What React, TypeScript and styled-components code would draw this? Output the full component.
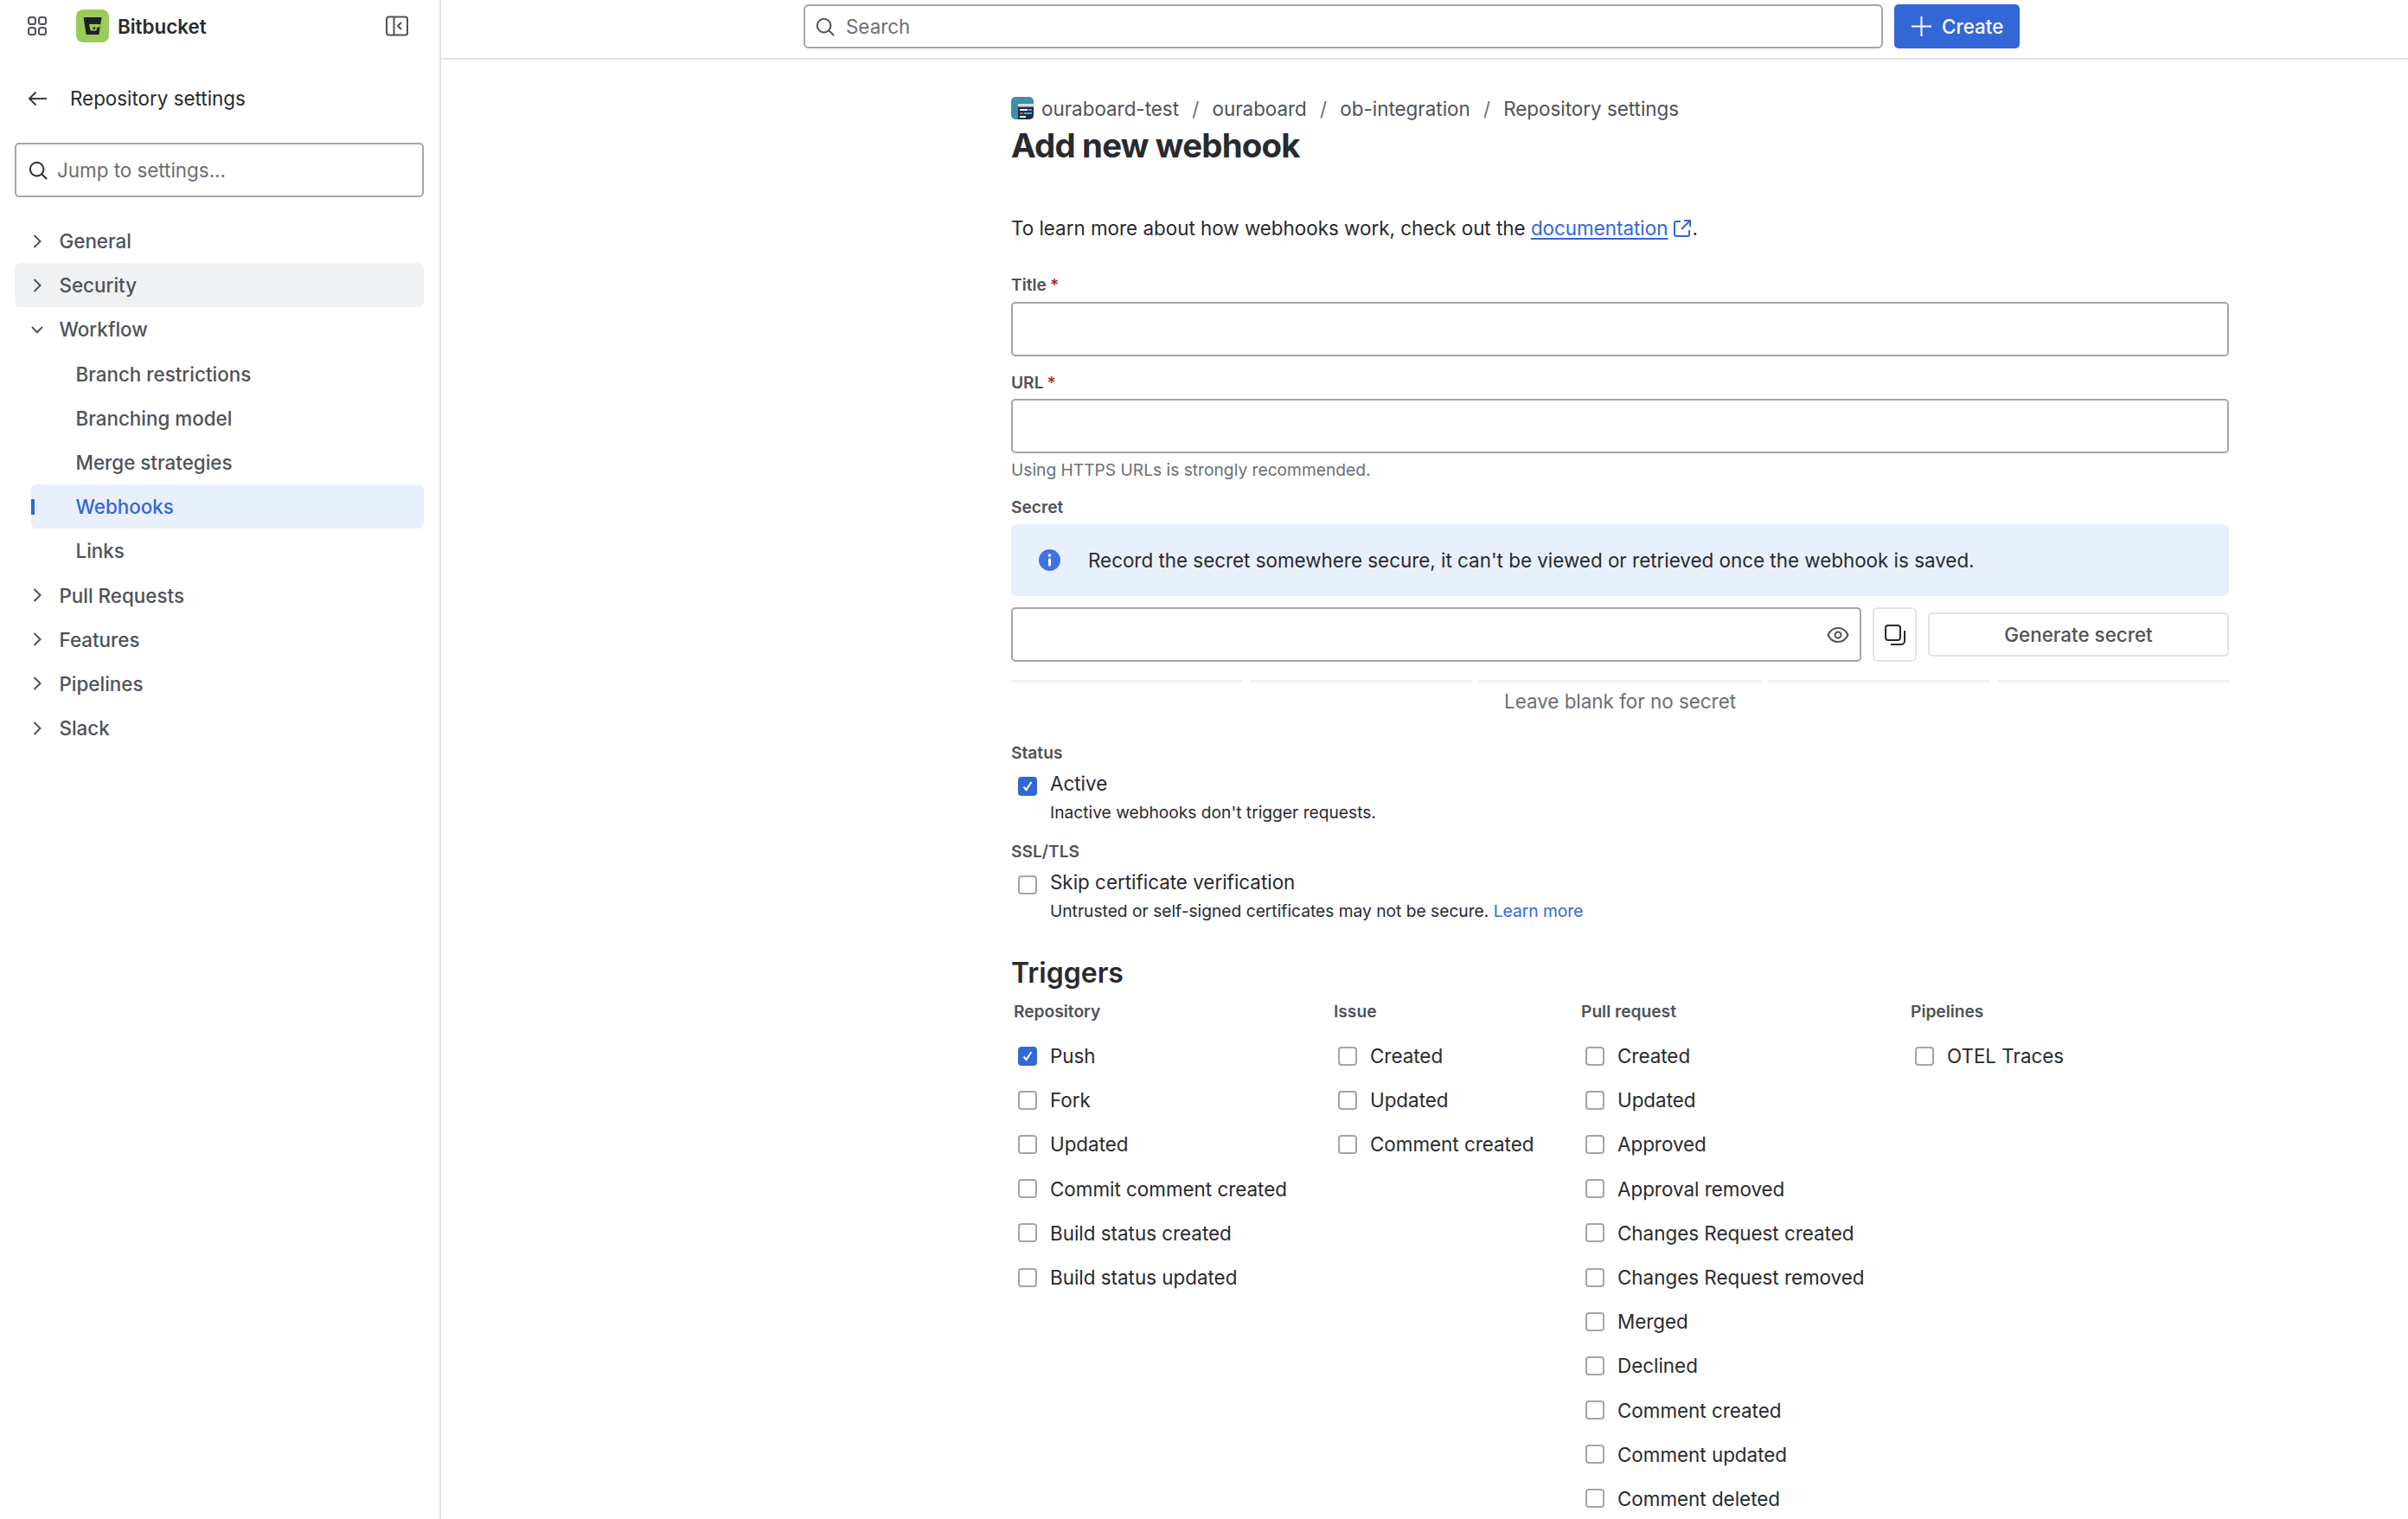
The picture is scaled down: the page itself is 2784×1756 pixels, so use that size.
import React from 'react';
import styled, { createGlobalStyle } from 'styled-components';

const GlobalStyle = createGlobalStyle`
  html, body {
    margin: 0;
    height: 1756px;
    overflow: hidden;
    background: #fff;
  }
  * {
    box-sizing: border-box;
  }
  body {
    font-family: Inter, "Noto Sans", sans-serif;
    font-size: 22.4px;
    color: #292a2e;
  }
`;

const Layout = styled.div`
  display: grid;
  grid-template-columns: 510px 1fr;
  height: 1756px;
  overflow: hidden;
`;

const Sidebar = styled.aside`
  border-right: 2px solid #e2e3e6;
  padding: 0 18px 0 17px;
`;

const SideTop = styled.div`
  display: flex;
  align-items: center;
  height: 60px;
  padding: 0 18px 0 15px;
`;

const Logo = styled.svg`
  width: 38px;
  height: 38px;
  margin-left: 34px;
`;

const BrandName = styled.span`
  margin-left: 10px;
  font-weight: 600;
  font-size: 22.4px;
  flex: 1;
`;

const BackRow = styled.div`
  display: flex;
  align-items: center;
  gap: 27px;
  height: 49px;
  margin-top: 29px;
  padding-left: 15px;
  font-weight: 400;
`;

const JumpBox = styled.label`
  display: flex;
  align-items: center;
  gap: 11px;
  height: 63px;
  margin-top: 27px;
  padding: 0 14px;
  border: 2px solid #a3a5ab;
  border-radius: 5px;
`;

const BareInput = styled.input`
  flex: 1;
  min-width: 0;
  border: 0;
  outline: 0;
  padding: 0;
  background: transparent;
  font: 400 22.4px Inter, sans-serif;
  color: #292a2e;
  &::placeholder {
    color: #6b6e76;
    opacity: 1;
  }
`;

const Nav = styled.nav`
  margin-top: 25px;
`;

const NavRow = styled.div<{ $child?: boolean; $selected?: boolean; $hover?: boolean }>`
  position: relative;
  display: flex;
  align-items: center;
  height: 51.2px;
  margin-left: ${(p) => (p.$child ? '19px' : '0')};
  padding-left: ${(p) => (p.$child ? '51.5px' : '0')};
  border-radius: 6.4px;
  font-weight: 500;
  color: ${(p) => (p.$selected ? '#3367d6' : '#505258')};
  background: ${(p) => (p.$selected ? '#e9f0fd' : p.$hover ? '#f0f1f2' : 'transparent')};
`;

const SelectedMark = styled.span`
  position: absolute;
  left: 0;
  top: 17px;
  width: 4px;
  height: 18px;
  background: #3367d6;
`;

const ChevronSlot = styled.span`
  display: flex;
  justify-content: center;
  align-items: center;
  width: 52px;
  margin-right: -0.5px;
`;

const Main = styled.main`
  min-width: 0;
`;

const TopBar = styled.header`
  display: flex;
  gap: 13px;
  height: 69px;
  padding: 5px 0 0 419px;
  border-bottom: 2px solid #e2e3e6;
`;

const GlobalSearch = styled.label`
  display: flex;
  align-items: center;
  gap: 13px;
  width: 1248px;
  height: 51px;
  padding: 0 12px;
  border: 2px solid #a3a5ab;
  border-radius: 6px;
`;

const CreateButton = styled.button`
  display: flex;
  align-items: center;
  gap: 12px;
  width: 145px;
  height: 51px;
  padding: 0 0 0 20px;
  border: 0;
  border-radius: 5px;
  background: #3367d6;
  color: #fff;
  font: 500 22.4px Inter, sans-serif;
`;

const Content = styled.div`
  width: 2067px;
  padding: 40px 0 0 659px;
`;

const Crumbs = styled.div`
  display: flex;
  align-items: center;
  height: 32px;
  color: #505258;
`;

const CrumbIcon = styled.svg`
  width: 26px;
  height: 26px;
  margin-right: 9px;
`;

const CrumbSep = styled.span`
  width: 38.5px;
  text-align: center;
  color: #6b6e76;
`;

const Heading = styled.h1`
  margin: 5px 0 0;
  font-size: 38.4px;
  line-height: 44px;
  font-weight: 700;
  letter-spacing: -0.8px;
`;

const Intro = styled.p`
  display: flex;
  align-items: center;
  margin: 58px 0 0;
  line-height: 32px;
  white-space: pre;
`;

const DocLink = styled.a`
  color: #3367d6;
  text-decoration: underline;
  text-underline-offset: 3px;
`;

const ExternalIcon = styled.svg`
  width: 22px;
  height: 22px;
  margin-left: 6px;
`;

const FieldLabel = styled.div<{ $top: number }>`
  margin-top: ${(p) => p.$top}px;
  font-size: 19.2px;
  line-height: 24px;
  font-weight: 600;
  color: #505258;
`;

const Required = styled.span`
  margin-left: 4px;
  color: #ae2e24;
`;

const TextField = styled.input<{ $top: number }>`
  display: block;
  width: 100%;
  height: 63px;
  margin-top: ${(p) => p.$top}px;
  padding: 0 14px;
  border: 2px solid #a3a5ab;
  border-radius: 5px;
  outline: 0;
  background: #fff;
`;

const HelpText = styled.div`
  margin-top: 7px;
  font-size: 19.2px;
  line-height: 24px;
  color: #6b6e76;
`;

const Banner = styled.div`
  display: flex;
  align-items: center;
  gap: 32px;
  height: 83px;
  margin-top: 8px;
  padding-left: 32px;
  border-radius: 6.4px;
  background: #e9f0fd;
`;

const SecretRow = styled.div`
  display: flex;
  align-items: center;
  gap: 13px;
  margin-top: 13px;
`;

const SecretField = styled.label`
  display: flex;
  align-items: center;
  width: 983px;
  height: 63px;
  padding: 0 12px 0 14px;
  border: 2px solid #a3a5ab;
  border-radius: 5px;
`;

const CopyButton = styled.button`
  display: flex;
  align-items: center;
  justify-content: center;
  width: 51px;
  height: 63px;
  padding: 0;
  border: 2px solid #e2e3e6;
  border-radius: 6px;
  background: #fff;
`;

const GenerateButton = styled.button`
  flex: 1;
  height: 51px;
  border: 2px solid #e2e3e6;
  border-radius: 5px;
  background: #fff;
  color: #505258;
  font: 500 22.4px Inter, sans-serif;
`;

const StrengthBars = styled.div`
  display: grid;
  grid-template-columns: 268fr 257fr 326fr 257fr 268fr;
  gap: 8px;
  margin-top: 21px;
`;

const StrengthBar = styled.span`
  height: 3px;
  background: #f0f1f2;
`;

const StrengthHint = styled.div`
  margin-top: 6px;
  line-height: 32px;
  text-align: center;
  color: #6b6e76;
`;

const OptionRow = styled.div`
  display: flex;
  align-items: flex-start;
  gap: 15px;
  height: 32px;
  margin-top: 8px;
  padding-left: 8px;
  line-height: 32px;
`;

const OptionNote = styled.div`
  margin-top: 5px;
  padding-left: 45px;
  font-size: 19.2px;
  line-height: 24px;
`;

const NoteLink = styled.a`
  color: #3367d6;
`;

const Box = styled.span<{ $checked?: boolean; $nudge?: boolean }>`
  flex: none;
  display: flex;
  align-items: center;
  justify-content: center;
  width: 22px;
  height: 22px;
  margin-top: ${(p) => (p.$nudge ? '8px' : '0')};
  border: ${(p) => (p.$checked ? '0' : '2px solid #a3a5ab')};
  border-radius: 4px;
  background: ${(p) => (p.$checked ? '#3367d6' : '#fff')};
`;

const SectionTitle = styled.h2`
  margin: 40px 0 0;
  font-size: 32px;
  line-height: 40px;
  font-weight: 600;
`;

const TriggerGrid = styled.div`
  display: grid;
  grid-template-columns: 370px 286px 381px 1fr;
  margin-top: 12px;
  padding-left: 3px;
`;

const ColumnTitle = styled.div`
  height: 38px;
  font-size: 19.2px;
  line-height: 24px;
  font-weight: 600;
  color: #505258;
`;

const TriggerRow = styled.div`
  display: flex;
  align-items: center;
  gap: 15px;
  height: 51.2px;
  padding-left: 5px;
`;

const Chevron = ({ open }: { open?: boolean }) =>
  open ? (
    <svg width="16" height="10" viewBox="0 0 16 10" fill="none">
      <path d="M2 2l6 6 6-6" stroke="#505258" strokeWidth="2" />
    </svg>
  ) : (
    <svg width="10" height="18" viewBox="0 0 10 18" fill="none">
      <path d="M1.5 2l7 7-7 7" stroke="#505258" strokeWidth="2" />
    </svg>
  );

const SearchIcon = ({ color, size }: { color: string; size: number }) => (
  <svg width={size} height={size} viewBox="0 0 24 24" fill="none">
    <circle cx="10.5" cy="10.5" r="8.5" stroke={color} strokeWidth="2.2" />
    <path d="M16.5 16.5l6.5 6.5" stroke={color} strokeWidth="2.2" />
  </svg>
);

const Check = () => (
  <svg width="14" height="16" viewBox="0 0 14 16" fill="none">
    <path d="M2.5 8.5l3 3.500L11.500 3" stroke="#fff" strokeWidth="2" />
  </svg>
);

const sections = [
  { name: 'General' },
  { name: 'Security', hover: true },
  { name: 'Workflow', open: true },
];

const workflowItems = ['Branch restrictions', 'Branching model', 'Merge strategies', 'Webhooks', 'Links'];
const lowerSections = ['Pull Requests', 'Features', 'Pipelines', 'Slack'];
const crumbs = ['ouraboard', 'ob-integration', 'Repository settings'];

const triggerColumns = [
  {
    title: 'Repository',
    items: ['Push', 'Fork', 'Updated', 'Commit comment created', 'Build status created', 'Build status updated'],
  },
  { title: 'Issue', items: ['Created', 'Updated', 'Comment created'] },
  {
    title: 'Pull request',
    items: [
      'Created',
      'Updated',
      'Approved',
      'Approval removed',
      'Changes Request created',
      'Changes Request removed',
      'Merged',
      'Declined',
      'Comment created',
      'Comment updated',
      'Comment deleted',
    ],
  },
  { title: 'Pipelines', items: ['OTEL Traces'] },
];

const App = () => {
  return (
    <Layout>
      <GlobalStyle />
      <Sidebar>
        <SideTop>
          <svg width="22" height="22" viewBox="0 0 22 22" fill="none">
            <rect x="1" y="1" width="8" height="8" rx="2.5" stroke="#505258" strokeWidth="2" />
            <rect x="13" y="1" width="8" height="8" rx="2.5" stroke="#505258" strokeWidth="2" />
            <rect x="1" y="13" width="8" height="8" rx="2.5" stroke="#505258" strokeWidth="2" />
            <rect x="13" y="13" width="8" height="8" rx="2.5" stroke="#505258" strokeWidth="2" />
          </svg>
          <Logo viewBox="0 0 38 38">
            <rect width="38" height="38" rx="8" fill="#9ccb5a" />
            <path d="M8.5 9h21l-3.2 20H11.7z" fill="#1f2024" />
            <path d="M15 17h13l-.7 3.6h-3l-.9 4h-6.8z" fill="#9ccb5a" />
            <path d="M19 20.6h3.6l-.5 2.2h-2.6z" fill="#1f2024" />
          </Logo>
          <BrandName>Bitbucket</BrandName>
          <svg width="26" height="24" viewBox="0 0 26 24" fill="none">
            <rect x="1" y="1.5" width="24" height="21" rx="2.5" stroke="#505258" strokeWidth="2" />
            <path d="M9.5 2v20" stroke="#505258" strokeWidth="2" />
            <path d="M18 8l-4 4 4 4" stroke="#505258" strokeWidth="2" />
          </svg>
        </SideTop>

        <BackRow>
          <svg width="22" height="18" viewBox="0 0 22 18" fill="none">
            <path d="M22 9H2M9.5 1.5L2 9l7.5 7.5" stroke="#3a3b40" strokeWidth="2" />
          </svg>
          Repository settings
        </BackRow>

        <JumpBox>
          <SearchIcon color="#292a2e" size={22} />
          <BareInput placeholder="Jump to settings..." readOnly />
        </JumpBox>

        <Nav>
          {sections.map((s) => (
            <NavRow key={s.name} $hover={s.hover}>
              <ChevronSlot>
                <Chevron open={s.open} />
              </ChevronSlot>
              {s.name}
            </NavRow>
          ))}
          {workflowItems.map((item) => (
            <NavRow key={item} $child $selected={item === 'Webhooks'}>
              {item === 'Webhooks' && <SelectedMark />}
              {item}
            </NavRow>
          ))}
          {lowerSections.map((name) => (
            <NavRow key={name}>
              <ChevronSlot>
                <Chevron />
              </ChevronSlot>
              {name}
            </NavRow>
          ))}
        </Nav>
      </Sidebar>

      <Main>
        <TopBar>
          <GlobalSearch>
            <SearchIcon color="#505258" size={22} />
            <BareInput placeholder="Search" readOnly />
          </GlobalSearch>
          <CreateButton>
            <svg width="23" height="23" viewBox="0 0 23 23" fill="none">
              <path d="M11.5 0v23M0 11.5h23" stroke="#fff" strokeWidth="2" />
            </svg>
            Create
          </CreateButton>
        </TopBar>

        <Content>
          <Crumbs>
            <CrumbIcon viewBox="0 0 26 26">
              <rect width="26" height="26" rx="5" fill="#3f8fa9" />
              <path d="M8 8h18v13a5 5 0 0 1-5 5H8z" fill="#1d2c4f" />
              <rect x="8" y="8" width="18" height="3.5" fill="#d7dde2" />
              <rect x="10" y="14" width="9" height="2" fill="#fff" />
              <rect x="20" y="14" width="4" height="2" fill="#4fb0b8" />
              <rect x="10" y="18" width="4" height="2" fill="#d8483f" />
              <rect x="15" y="18" width="9" height="2" fill="#4fb0b8" />
              <rect x="10" y="22" width="7" height="2" fill="#fff" />
            </CrumbIcon>
            ouraboard-test
            {crumbs.map((c) => (
              <React.Fragment key={c}>
                <CrumbSep>/</CrumbSep>
                {c}
              </React.Fragment>
            ))}
          </Crumbs>
          <Heading>Add new webhook</Heading>

          <Intro>
            To learn more about how webhooks work, check out the <DocLink>documentation</DocLink>
            <ExternalIcon viewBox="0 0 22 22" fill="none">
              <path d="M9 3H4a2 2 0 0 0-2 2v13a2 2 0 0 0 2 2h13a2 2 0 0 0 2-2v-5" stroke="#3367d6" strokeWidth="2" />
              <path d="M13 2h7v7M20 2L10 12" stroke="#3367d6" strokeWidth="2" />
            </ExternalIcon>
            .
          </Intro>

          <FieldLabel $top={37}>
            Title<Required>*</Required>
          </FieldLabel>
          <TextField $top={8} readOnly />
          <FieldLabel $top={18}>
            URL<Required>*</Required>
          </FieldLabel>
          <TextField $top={7} readOnly />
          <HelpText>Using HTTPS URLs is strongly recommended.</HelpText>

          <FieldLabel $top={19}>Secret</FieldLabel>
          <Banner>
            <svg width="25" height="25" viewBox="0 0 25 25">
              <circle cx="12.5" cy="12.5" r="12.5" fill="#3f72de" />
              <rect x="11" y="10.5" width="3" height="9" rx="1" fill="#fff" />
              <circle cx="12.5" cy="7" r="1.8" fill="#fff" />
            </svg>
            Record the secret somewhere secure, it can't be viewed or retrieved once the webhook is saved.
          </Banner>

          <SecretRow>
            <SecretField>
              <BareInput readOnly />
              <svg width="26" height="20" viewBox="0 0 26 20" fill="none">
                <path d="M1.5 10C4 4.5 8 2 13 2s9 2.5 11.5 8C22 15.500 18 18 13 18S4 15.500 1.500 10z" stroke="#505258" strokeWidth="2" />
                <circle cx="13" cy="10" r="3.500" stroke="#505258" strokeWidth="2" />
              </svg>
            </SecretField>
            <CopyButton>
              <svg width="24" height="24" viewBox="0 0 24 24" fill="none">
                <rect x="1" y="1" width="17" height="17" rx="3" stroke="#292a2e" strokeWidth="2" />
                <path d="M23 7v12a4 4 0 0 1-4 4H7" stroke="#292a2e" strokeWidth="2" />
              </svg>
            </CopyButton>
            <GenerateButton>Generate secret</GenerateButton>
          </SecretRow>

          <StrengthBars>
            {[0, 1, 2, 3, 4].map((i) => (
              <StrengthBar key={i} />
            ))}
          </StrengthBars>
          <StrengthHint>Leave blank for no secret</StrengthHint>

          <FieldLabel $top={31}>Status</FieldLabel>
          <OptionRow>
            <Box $checked $nudge>
              <Check />
            </Box>
            Active
          </OptionRow>
          <OptionNote>Inactive webhooks don't trigger requests.</OptionNote>

          <FieldLabel $top={21}>SSL/TLS</FieldLabel>
          <OptionRow>
            <Box $nudge />
            Skip certificate verification
          </OptionRow>
          <OptionNote>
            Untrusted or self-signed certificates may not be secure. <NoteLink>Learn more</NoteLink>
          </OptionNote>

          <SectionTitle>Triggers</SectionTitle>
          <TriggerGrid>
            {triggerColumns.map((col) => (
              <div key={col.title}>
                <ColumnTitle>{col.title}</ColumnTitle>
                {col.items.map((item) => (
                  <TriggerRow key={item}>
                    <Box $checked={item === 'Push'}>{item === 'Push' && <Check />}</Box>
                    {item}
                  </TriggerRow>
                ))}
              </div>
            ))}
          </TriggerGrid>
        </Content>
      </Main>
    </Layout>
  );
};

export default App;
